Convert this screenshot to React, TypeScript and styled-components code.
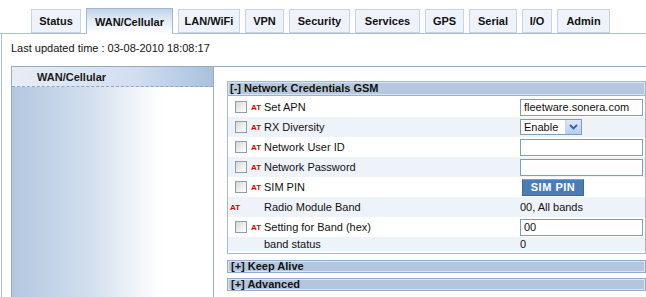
import { FC } from "react";
import styled, { createGlobalStyle } from "styled-components";

const GlobalStyle = createGlobalStyle`
  html, body {
    margin: 0;
    padding: 0;
    background: #ffffff;
    overflow: hidden;
  }
  body {
    font-family: "Liberation Sans", Arial, sans-serif;
    font-size: 11px;
    color: #111111;
  }
`;

const tabs = [
  { label: "Status", width: 50 },
  { label: "WAN/Cellular", width: 87, active: true },
  { label: "LAN/WiFi", width: 62 },
  { label: "VPN", width: 39 },
  { label: "Security", width: 61 },
  { label: "Services", width: 65 },
  { label: "GPS", width: 39 },
  { label: "Serial", width: 48 },
  { label: "I/O", width: 30 },
  { label: "Admin", width: 53 },
];

type RowProps = {
  label: string;
  check?: boolean;
  value: React.ReactNode;
};

const App: FC = () => {
  const rows: RowProps[] = [
    { label: "Set APN", check: true, value: <TextInput defaultValue="fleetware.sonera.com" /> },
    {
      label: "RX Diversity",
      check: true,
      value: (
        <SelectBox>
          <span>Enable</span>
          <ArrowBtn>
            <svg width="9" height="6" viewBox="0 0 9 6">
              <path d="M1 1 L4.5 4.5 L8 1" stroke="#3a5f9c" strokeWidth="1.8" fill="none" />
            </svg>
          </ArrowBtn>
        </SelectBox>
      ),
    },
    { label: "Network User ID", check: true, value: <TextInput /> },
    { label: "Network Password", check: true, value: <TextInput type="password" /> },
    { label: "SIM PIN", check: true, value: <PinButton>SIM PIN</PinButton> },
    { label: "Radio Module Band", value: <PlainValue>00, All bands</PlainValue> },
    { label: "Setting for Band (hex)", check: true, value: <TextInput defaultValue="00" /> },
  ];

  return (
    <>
      <GlobalStyle />
      <Page>
        <TabBar>
          {tabs.map((t) => (
            <Tab key={t.label} $active={!!t.active} style={{ width: t.width }}>
              {t.label}
            </Tab>
          ))}
        </TabBar>
        <Frame>
          <Updated>Last updated time : 03-08-2010 18:08:17</Updated>
          <Body>
            <SideNav>
              <SideHead>WAN/Cellular</SideHead>
              <SideFill />
            </SideNav>
            <Main>
              <Section>
                <SectionHead>[-] Network Credentials GSM</SectionHead>
                {rows.map((r, i) => (
                  <Row key={r.label} $shaded={i % 2 === 1}>
                    <CheckCell>
                      {r.check ? (
                        <>
                          <Check type="checkbox" />
                          <AtTag>AT</AtTag>
                        </>
                      ) : (
                        <AtTag $alone>AT</AtTag>
                      )}
                    </CheckCell>
                    <Label>{r.label}</Label>
                    <ValueCell>{r.value}</ValueCell>
                  </Row>
                ))}
                <Row $shaded $short>
                  <CheckCell />
                  <Label>band status</Label>
                  <ValueCell>
                    <PlainValue>0</PlainValue>
                  </ValueCell>
                </Row>
              </Section>
              <CollapsedHead>[+] Keep Alive</CollapsedHead>
              <CollapsedHead>[+] Advanced</CollapsedHead>
            </Main>
          </Body>
        </Frame>
      </Page>
    </>
  );
};

const Page = styled.div`
  width: 646px;
  height: 297px;
  overflow: hidden;
  display: flex;
  flex-direction: column;
`;

const TabBar = styled.div`
  height: 34px;
  display: flex;
  align-items: flex-end;
  gap: 5px;
  padding-left: 31px;
  border-bottom: 1px solid #a9bdd4;
  box-sizing: border-box;
`;

const Tab = styled.div<{ $active: boolean }>`
  box-sizing: border-box;
  height: ${(p) => (p.$active ? 26 : 24)}px;
  margin-bottom: ${(p) => (p.$active ? -1 : 0)}px;
  display: flex;
  align-items: center;
  justify-content: center;
  font-weight: bold;
  font-size: 11px;
  color: #111;
  white-space: nowrap;
  border: 1px solid ${(p) => (p.$active ? "#9fb7d2" : "#c7d4e4")};
  border-bottom: ${(p) => (p.$active ? "none" : "1px solid #c7d4e4")};
  background: ${(p) =>
    p.$active ? "linear-gradient(to bottom, #bfd1e8 0%, #e3ebf5 45%, #ffffff 100%)" : "#eef3fb"};
  padding-top: ${(p) => (p.$active ? 1 : 0)}px;
`;

const Frame = styled.div`
  flex: 1;
  margin-left: 1px;
  border-left: 1px solid #a9bdd4;
  display: flex;
  flex-direction: column;
`;

const Updated = styled.div`
  height: 32px;
  padding: 8px 0 0 9px;
  box-sizing: border-box;
  line-height: 13px;
  font-size: 11px;
  color: #111;
`;

const Body = styled.div`
  flex: 1;
  margin-left: 9px;
  border-top: 1px solid #93aac3;
  display: flex;
`;

const SideNav = styled.div`
  width: 201px;
  flex-shrink: 0;
  border-left: 1px solid #98adc4;
  border-right: 1px solid #98adc4;
  display: flex;
  flex-direction: column;
`;

const SideHead = styled.div`
  height: 20px;
  box-sizing: border-box;
  padding: 4px 0 0 25px;
  font-weight: bold;
  font-size: 11px;
  color: #1a1a1a;
  background: linear-gradient(to right, #e6edf5 0%, #d2dff0 60%, #a8c1de 100%);
  border-bottom: 1px dashed #8ea6c2;
`;

const SideFill = styled.div`
  flex: 1;
  background: linear-gradient(to right, #b3c7e0 0%, #d3e0ef 40%, #f4f7fb 65%, #ffffff 75%);
`;

const Main = styled.div`
  flex: 1;
  padding: 14px 0 0 13px;
  display: flex;
  flex-direction: column;
  gap: 5px;
  min-width: 0;
`;

const Section = styled.div`
  border: 1px solid #a3b8d1;
  padding-bottom: 2px;
  margin-bottom: 1px;
`;

const SectionHead = styled.div`
  height: 13px;
  line-height: 13px;
  padding-left: 2px;
  margin-bottom: 1px;
  font-weight: bold;
  font-size: 11px;
  color: #111;
  background: #b7c8de;
  box-shadow: inset 0 0 0 1px #d9e3ef;
  border-bottom: 1px solid #9cb2cc;
`;

const Row = styled.div<{ $shaded?: boolean; $short?: boolean }>`
  display: grid;
  grid-template-columns: 36px 1fr 125px;
  align-items: center;
  height: ${(p) => (p.$short ? 14 : 20)}px;
  background: ${(p) => (p.$shaded ? "#eef2f9" : "#ffffff")};
`;

const CheckCell = styled.div`
  display: flex;
  align-items: center;
  padding-left: 7px;
`;

const Check = styled.input`
  appearance: none;
  margin: 0;
  width: 12px;
  height: 12px;
  border: 1px solid #8a9fb3;
  background: linear-gradient(135deg, #d8d8d2 0%, #f1f1ee 60%, #ffffff 100%);
  box-sizing: border-box;
`;

const AtTag = styled.span<{ $alone?: boolean }>`
  font-size: 8px;
  font-weight: bold;
  color: #d40000;
  margin-left: ${(p) => (p.$alone ? -5 : 4)}px;
`;

const Label = styled.div`
  font-size: 11px;
  font-weight: normal;
  color: #111;
  white-space: nowrap;
`;

const ValueCell = styled.div`
  display: flex;
  align-items: center;
`;

const TextInput = styled.input`
  width: 123px;
  height: 17px;
  box-sizing: border-box;
  border: 1px solid #7f9db9;
  padding: 0 3px;
  font-family: "Liberation Sans", Arial, sans-serif;
  font-size: 11px;
  color: #111;
  outline: none;
`;

const SelectBox = styled.div`
  width: 62px;
  height: 16px;
  box-sizing: border-box;
  border: 1px solid #7f9db9;
  display: flex;
  align-items: center;
  justify-content: space-between;
  padding-left: 3px;
  font-size: 11px;
  background: #fff;
`;

const ArrowBtn = styled.span`
  width: 15px;
  height: 14px;
  display: flex;
  align-items: center;
  justify-content: center;
  background: linear-gradient(to bottom, #dfe8fb, #b7cbf2);
  border-left: 1px solid #c6d5f3;
`;

const PinButton = styled.div`
  margin-left: 2px;
  width: 62px;
  height: 17px;
  box-sizing: border-box;
  display: flex;
  align-items: center;
  justify-content: center;
  background: #4a7db5;
  border: 1px solid #3b6aa0;
  border-top-color: #7aa0cc;
  color: #ffffff;
  font-weight: bold;
  font-size: 11px;
  letter-spacing: 0.5px;
`;

const PlainValue = styled.span`
  font-size: 11px;
  color: #111;
`;

const CollapsedHead = styled.div`
  height: 13px;
  line-height: 11px;
  box-sizing: border-box;
  padding-left: 3px;
  font-weight: bold;
  font-size: 11px;
  color: #111;
  background: #b4c6dd;
  border: 1px solid #93acc9;
  box-shadow: inset 0 0 0 1px #dbe5f1;
`;

export default App;
